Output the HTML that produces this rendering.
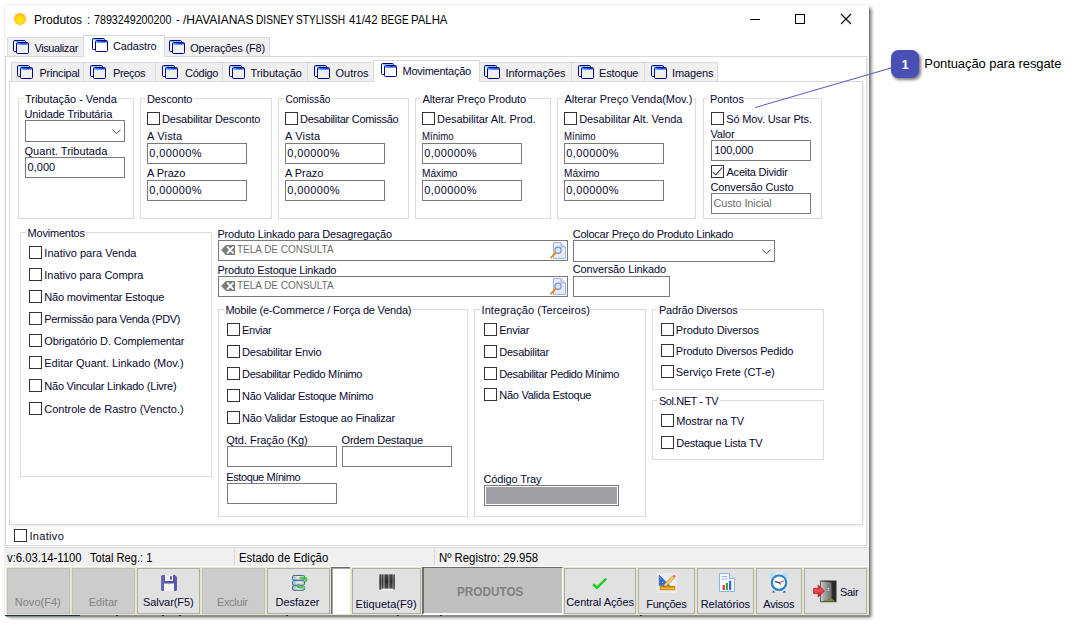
<!DOCTYPE html>
<html><head><meta charset="utf-8"><title>Produtos</title>
<style>
html,body{margin:0;padding:0;background:#fff;}
body{width:1078px;height:626px;position:relative;overflow:hidden;font-family:"Liberation Sans",sans-serif;}
div,svg{position:absolute;box-sizing:content-box}
.t{font:11px/13px "Liberation Sans",sans-serif;letter-spacing:-0.16px;color:#08082e;white-space:nowrap}
.gl{background:#fff;padding:0 1.5px;margin-left:-1.5px}
.s{font:12px/14px "Liberation Sans",sans-serif;color:#000;white-space:nowrap}
.cb{width:11px;height:11px;border:1px solid #333;background:#fff}
.in{border:1px solid #7a7a7a;background:#fff}
.gb{border:1px solid #dcdcdc}
.tab{border:1px solid #d9d9d9;border-bottom:none;background:#f0f0f0}
.tabsel{background:#fff}
.btn{border:1px solid #adadad;background:#e1e1e1}
.btnd{border:1px solid #bfbfbf;background:#cccccc}
</style></head><body>
<svg width="0" height="0"><defs><linearGradient id="tg" x1="0" x2="1"><stop offset="0" stop-color="#58b8ff"/><stop offset=".3" stop-color="#2268f0"/><stop offset="1" stop-color="#1838c8"/></linearGradient><linearGradient id="tg2" x1="0" x2="1"><stop offset="0" stop-color="#7cc8ff"/><stop offset=".5" stop-color="#4a90ff"/><stop offset="1" stop-color="#6aa4ff"/></linearGradient></defs></svg>

<div id="win" style="left:5px;top:5px;width:864px;height:610px;background:#fff;box-shadow:2.5px 2.5px 3.5px 0px rgba(0,0,0,.6),0 0 1.5px rgba(0,0,0,.22)"></div>
<div style="left:6px;top:615px;width:864px;height:1.6px;background:#8e8e8e"></div>
<div style="left:5px;top:615px;width:75px;height:1.3px;background:#1b2f4a"></div>
<div style="left:116px;top:615.3px;width:1.5px;height:1px;background:#2a2a3a"></div>
<div style="left:162px;top:615.3px;width:1.5px;height:1px;background:#2a2a3a"></div>
<div style="left:179px;top:615.3px;width:1.5px;height:1px;background:#2a2a3a"></div>
<div style="left:286px;top:615.3px;width:1.5px;height:1px;background:#2a2a3a"></div>
<div style="left:397px;top:615.3px;width:1.5px;height:1px;background:#2a2a3a"></div>
<div style="left:440px;top:615.3px;width:1.5px;height:1px;background:#2a2a3a"></div>
<div style="left:640px;top:615.3px;width:1.5px;height:1px;background:#2a2a3a"></div>
<svg width="18" height="18" viewBox="0 0 18 18" style="left:11px;top:10px"><defs><radialGradient id="sun" cx=".5" cy=".62" r=".6"><stop offset="0" stop-color="#fff400"/><stop offset=".6" stop-color="#ffd21e"/><stop offset="1" stop-color="#ffb42e"/></radialGradient></defs><g stroke="#ffc868" stroke-width="1.1" opacity=".55"><path d="M9 1.5V16.5M1.5 9H16.5M3.7 3.7L14.3 14.3M14.3 3.7L3.7 14.3"/></g><circle cx="9" cy="9" r="6" fill="url(#sun)"/></svg>
<div class="s" style="left:33.9px;top:12.8px;transform:scaleX(1.0015);transform-origin:0 0;color:#000">Produtos</div>
<div class="s" style="left:87.0px;top:12.8px;transform:scaleX(0.9300);transform-origin:0 0;color:#000">:</div>
<div class="s" style="left:94.3px;top:12.8px;transform:scaleX(0.8917);transform-origin:0 0;color:#000">7893249200200</div>
<div class="s" style="left:175.9px;top:12.8px;transform:scaleX(0.9300);transform-origin:0 0;color:#000">-</div>
<div class="s" style="left:183.4px;top:12.8px;transform:scaleX(1.0022);transform-origin:0 0;color:#000">/HAVAIANAS</div>
<div class="s" style="left:256.1px;top:12.8px;transform:scaleX(0.8462);transform-origin:0 0;color:#000">DISNEY</div>
<div class="s" style="left:296.4px;top:12.8px;transform:scaleX(0.8446);transform-origin:0 0;color:#000">STYLISSH</div>
<div class="s" style="left:349.0px;top:12.8px;transform:scaleX(0.9504);transform-origin:0 0;color:#000">41/42</div>
<div class="s" style="left:381.2px;top:12.8px;transform:scaleX(0.8271);transform-origin:0 0;color:#000">BEGE</div>
<div class="s" style="left:411.4px;top:12.8px;transform:scaleX(0.9472);transform-origin:0 0;color:#000">PALHA</div>
<svg width="110" height="14" viewBox="0 0 110 14" style="left:745px;top:12px"><path d="M5 7.5H15" stroke="#000" stroke-width="1"/><rect x="50.5" y="2.5" width="9" height="9" fill="none" stroke="#000"/><path d="M96 2L106 12M106 2L96 12" stroke="#000" stroke-width="1.1"/></svg>
<div style="left:5px;top:56px;width:860px;height:488px;border:1px solid #d9d9d9;background:#fff;box-shadow:1.5px 0 0 #f1f1f1"></div>
<div class="tab" style="left:7px;top:37px;width:75px;height:18px"></div>
<svg class="ti" width="17" height="15" viewBox="0 0 17 15" style="left:13px;top:40px"><rect x="0.5" y="0.5" width="12" height="11" rx="1" fill="none" stroke="#00008b"/><rect x="1" y="1" width="11" height="1" fill="#7cc8ff"/><rect x="3.5" y="2.5" width="12" height="11" rx="1" fill="#f0f0f0" stroke="#00008b"/><rect x="4" y="3" width="11" height="1" fill="url(#tg)"/><rect x="4" y="4" width="11" height="1" fill="url(#tg2)"/><rect x="13.5" y="3" width="1.3" height="1" fill="#f03030"/></svg>
<div class="t" style="left:34.4px;top:41.9px;letter-spacing:-0.389px;">Visualizar</div>
<div class="tab" style="left:164px;top:37px;width:104px;height:18px"></div>
<svg class="ti" width="17" height="15" viewBox="0 0 17 15" style="left:169px;top:40px"><rect x="0.5" y="0.5" width="12" height="11" rx="1" fill="none" stroke="#00008b"/><rect x="1" y="1" width="11" height="1" fill="#7cc8ff"/><rect x="3.5" y="2.5" width="12" height="11" rx="1" fill="#f0f0f0" stroke="#00008b"/><rect x="4" y="3" width="11" height="1" fill="url(#tg)"/><rect x="4" y="4" width="11" height="1" fill="url(#tg2)"/><rect x="13.5" y="3" width="1.3" height="1" fill="#f03030"/></svg>
<div class="t" style="left:190.2px;top:41.9px;letter-spacing:-0.156px;">Operações (F8)</div>
<div class="tab tabsel" style="left:83px;top:35px;width:80px;height:21px"></div>
<svg class="ti" width="17" height="15" viewBox="0 0 17 15" style="left:92px;top:38px"><rect x="0.5" y="0.5" width="12" height="11" rx="1" fill="none" stroke="#00008b"/><rect x="1" y="1" width="11" height="1" fill="#7cc8ff"/><rect x="3.5" y="2.5" width="12" height="11" rx="1" fill="#fff" stroke="#00008b"/><rect x="4" y="3" width="11" height="1" fill="url(#tg)"/><rect x="4" y="4" width="11" height="1" fill="url(#tg2)"/><rect x="13.5" y="3" width="1.3" height="1" fill="#f03030"/></svg>
<div class="t" style="left:113.0px;top:39.9px;letter-spacing:-0.163px;">Cadastro</div>
<div style="left:9px;top:81px;width:852px;height:442px;border:1px solid #d9d9d9;background:#fff;box-shadow:1.5px 1.5px 0 #f1f1f1"></div>
<div class="tab" style="left:11px;top:62px;width:71px;height:18px"></div>
<svg class="ti" width="17" height="15" viewBox="0 0 17 15" style="left:17px;top:65px"><rect x="0.5" y="0.5" width="12" height="11" rx="1" fill="none" stroke="#00008b"/><rect x="1" y="1" width="11" height="1" fill="#7cc8ff"/><rect x="3.5" y="2.5" width="12" height="11" rx="1" fill="#f0f0f0" stroke="#00008b"/><rect x="4" y="3" width="11" height="1" fill="url(#tg)"/><rect x="4" y="4" width="11" height="1" fill="url(#tg2)"/><rect x="13.5" y="3" width="1.3" height="1" fill="#f03030"/></svg>
<div class="t" style="left:39.5px;top:66.9px;letter-spacing:-0.236px;">Principal</div>
<div class="tab" style="left:83px;top:62px;width:71px;height:18px"></div>
<svg class="ti" width="17" height="15" viewBox="0 0 17 15" style="left:90px;top:65px"><rect x="0.5" y="0.5" width="12" height="11" rx="1" fill="none" stroke="#00008b"/><rect x="1" y="1" width="11" height="1" fill="#7cc8ff"/><rect x="3.5" y="2.5" width="12" height="11" rx="1" fill="#f0f0f0" stroke="#00008b"/><rect x="4" y="3" width="11" height="1" fill="url(#tg)"/><rect x="4" y="4" width="11" height="1" fill="url(#tg2)"/><rect x="13.5" y="3" width="1.3" height="1" fill="#f03030"/></svg>
<div class="t" style="left:113.0px;top:66.9px;letter-spacing:-0.350px;">Preços</div>
<div class="tab" style="left:155px;top:62px;width:66px;height:18px"></div>
<svg class="ti" width="17" height="15" viewBox="0 0 17 15" style="left:162px;top:65px"><rect x="0.5" y="0.5" width="12" height="11" rx="1" fill="none" stroke="#00008b"/><rect x="1" y="1" width="11" height="1" fill="#7cc8ff"/><rect x="3.5" y="2.5" width="12" height="11" rx="1" fill="#f0f0f0" stroke="#00008b"/><rect x="4" y="3" width="11" height="1" fill="url(#tg)"/><rect x="4" y="4" width="11" height="1" fill="url(#tg2)"/><rect x="13.5" y="3" width="1.3" height="1" fill="#f03030"/></svg>
<div class="t" style="left:185.1px;top:66.9px;letter-spacing:-0.292px;">Código</div>
<div class="tab" style="left:222px;top:62px;width:84px;height:18px"></div>
<svg class="ti" width="17" height="15" viewBox="0 0 17 15" style="left:229px;top:65px"><rect x="0.5" y="0.5" width="12" height="11" rx="1" fill="none" stroke="#00008b"/><rect x="1" y="1" width="11" height="1" fill="#7cc8ff"/><rect x="3.5" y="2.5" width="12" height="11" rx="1" fill="#f0f0f0" stroke="#00008b"/><rect x="4" y="3" width="11" height="1" fill="url(#tg)"/><rect x="4" y="4" width="11" height="1" fill="url(#tg2)"/><rect x="13.5" y="3" width="1.3" height="1" fill="#f03030"/></svg>
<div class="t" style="left:250.4px;top:66.9px;letter-spacing:-0.007px;">Tributação</div>
<div class="tab" style="left:307px;top:62px;width:66px;height:18px"></div>
<svg class="ti" width="17" height="15" viewBox="0 0 17 15" style="left:314px;top:65px"><rect x="0.5" y="0.5" width="12" height="11" rx="1" fill="none" stroke="#00008b"/><rect x="1" y="1" width="11" height="1" fill="#7cc8ff"/><rect x="3.5" y="2.5" width="12" height="11" rx="1" fill="#f0f0f0" stroke="#00008b"/><rect x="4" y="3" width="11" height="1" fill="url(#tg)"/><rect x="4" y="4" width="11" height="1" fill="url(#tg2)"/><rect x="13.5" y="3" width="1.3" height="1" fill="#f03030"/></svg>
<div class="t" style="left:335.5px;top:66.9px;letter-spacing:-0.003px;">Outros</div>
<div class="tab" style="left:479px;top:62px;width:91px;height:18px"></div>
<svg class="ti" width="17" height="15" viewBox="0 0 17 15" style="left:484px;top:65px"><rect x="0.5" y="0.5" width="12" height="11" rx="1" fill="none" stroke="#00008b"/><rect x="1" y="1" width="11" height="1" fill="#7cc8ff"/><rect x="3.5" y="2.5" width="12" height="11" rx="1" fill="#f0f0f0" stroke="#00008b"/><rect x="4" y="3" width="11" height="1" fill="url(#tg)"/><rect x="4" y="4" width="11" height="1" fill="url(#tg2)"/><rect x="13.5" y="3" width="1.3" height="1" fill="#f03030"/></svg>
<div class="t" style="left:505.4px;top:66.9px;letter-spacing:-0.043px;">Informações</div>
<div class="tab" style="left:571px;top:62px;width:72px;height:18px"></div>
<svg class="ti" width="17" height="15" viewBox="0 0 17 15" style="left:578px;top:65px"><rect x="0.5" y="0.5" width="12" height="11" rx="1" fill="none" stroke="#00008b"/><rect x="1" y="1" width="11" height="1" fill="#7cc8ff"/><rect x="3.5" y="2.5" width="12" height="11" rx="1" fill="#f0f0f0" stroke="#00008b"/><rect x="4" y="3" width="11" height="1" fill="url(#tg)"/><rect x="4" y="4" width="11" height="1" fill="url(#tg2)"/><rect x="13.5" y="3" width="1.3" height="1" fill="#f03030"/></svg>
<div class="t" style="left:599.1px;top:66.9px;letter-spacing:-0.163px;">Estoque</div>
<div class="tab" style="left:644px;top:62px;width:72px;height:18px"></div>
<svg class="ti" width="17" height="15" viewBox="0 0 17 15" style="left:651px;top:65px"><rect x="0.5" y="0.5" width="12" height="11" rx="1" fill="none" stroke="#00008b"/><rect x="1" y="1" width="11" height="1" fill="#7cc8ff"/><rect x="3.5" y="2.5" width="12" height="11" rx="1" fill="#f0f0f0" stroke="#00008b"/><rect x="4" y="3" width="11" height="1" fill="url(#tg)"/><rect x="4" y="4" width="11" height="1" fill="url(#tg2)"/><rect x="13.5" y="3" width="1.3" height="1" fill="#f03030"/></svg>
<div class="t" style="left:672.0px;top:66.9px;letter-spacing:-0.117px;">Imagens</div>
<div class="tab tabsel" style="left:373px;top:60px;width:105px;height:21px"></div>
<svg class="ti" width="17" height="15" viewBox="0 0 17 15" style="left:381px;top:63px"><rect x="0.5" y="0.5" width="12" height="11" rx="1" fill="none" stroke="#00008b"/><rect x="1" y="1" width="11" height="1" fill="#7cc8ff"/><rect x="3.5" y="2.5" width="12" height="11" rx="1" fill="#fff" stroke="#00008b"/><rect x="4" y="3" width="11" height="1" fill="url(#tg)"/><rect x="4" y="4" width="11" height="1" fill="url(#tg2)"/><rect x="13.5" y="3" width="1.3" height="1" fill="#f03030"/></svg>
<div class="t" style="left:402.5px;top:64.9px;letter-spacing:-0.259px;">Movimentação</div>
<div class="gb" style="left:18px;top:98px;width:114px;height:119px"></div>
<div class="t gl" style="left:25.0px;top:92.9px;letter-spacing:-0.044px;">Tributação - Venda</div>
<div class="t" style="left:24.5px;top:107.9px;letter-spacing:-0.123px;">Unidade Tributária</div>
<div class="in" style="left:25px;top:120px;width:98px;height:20px"><svg width="9" height="6" viewBox="0 0 9 6" style="left:86px;top:8px"><path d="M0.4 0.6 L4.5 4.7 L8.6 0.6" fill="none" stroke="#404040" stroke-width="1"/></svg></div>
<div class="t" style="left:24.5px;top:144.9px;letter-spacing:0.056px;">Quant. Tributada</div>
<div class="in" style="left:25px;top:157px;width:98px;height:19px"></div>
<div class="t" style="left:27.5px;top:160.9px;letter-spacing:0.042px;">0,000</div>
<div class="gb" style="left:140px;top:98px;width:130px;height:119px"></div>
<div class="t gl" style="left:147.0px;top:92.9px;letter-spacing:-0.141px;">Desconto</div>
<div class="cb" style="left:147px;top:112px"></div>
<div class="t" style="left:162.0px;top:112.9px;letter-spacing:-0.163px;">Desabilitar Desconto</div>
<div class="t" style="left:147.0px;top:129.9px;letter-spacing:0.192px;">A Vista</div>
<div class="in" style="left:147px;top:143px;width:98px;height:19px"></div>
<div class="t" style="left:149.2px;top:146.9px;letter-spacing:0.393px;">0,00000%</div>
<div class="t" style="left:147.0px;top:166.9px;letter-spacing:-0.039px;">A Prazo</div>
<div class="in" style="left:147px;top:180px;width:98px;height:19px"></div>
<div class="t" style="left:149.2px;top:183.9px;letter-spacing:0.393px;">0,00000%</div>
<div class="gb" style="left:278px;top:98px;width:129px;height:119px"></div>
<div class="t gl" style="left:285.0px;top:92.9px;letter-spacing:0;transform:scaleX(0.9205);transform-origin:0 0;">Comissão</div>
<div class="cb" style="left:285px;top:112px"></div>
<div class="t" style="left:300.0px;top:112.9px;letter-spacing:-0.276px;">Desabilitar Comissão</div>
<div class="t" style="left:285.0px;top:129.9px;letter-spacing:0.192px;">A Vista</div>
<div class="in" style="left:285px;top:143px;width:98px;height:19px"></div>
<div class="t" style="left:287.2px;top:146.9px;letter-spacing:0.393px;">0,00000%</div>
<div class="t" style="left:285.0px;top:166.9px;letter-spacing:-0.039px;">A Prazo</div>
<div class="in" style="left:285px;top:180px;width:98px;height:19px"></div>
<div class="t" style="left:287.2px;top:183.9px;letter-spacing:0.393px;">0,00000%</div>
<div class="gb" style="left:415px;top:98px;width:134px;height:119px"></div>
<div class="t gl" style="left:422.5px;top:92.9px;letter-spacing:-0.104px;">Alterar Preço Produto</div>
<div class="cb" style="left:422px;top:112px"></div>
<div class="t" style="left:437.0px;top:112.9px;letter-spacing:-0.046px;">Desabilitar Alt. Prod.</div>
<div class="t" style="left:422.0px;top:129.9px;letter-spacing:0;transform:scaleX(0.8756);transform-origin:0 0;">Mínimo</div>
<div class="in" style="left:422px;top:143px;width:98px;height:19px"></div>
<div class="t" style="left:424.2px;top:146.9px;letter-spacing:0.393px;">0,00000%</div>
<div class="t" style="left:422.0px;top:166.9px;letter-spacing:0;transform:scaleX(0.9223);transform-origin:0 0;">Máximo</div>
<div class="in" style="left:422px;top:180px;width:98px;height:19px"></div>
<div class="t" style="left:424.2px;top:183.9px;letter-spacing:0.393px;">0,00000%</div>
<div class="gb" style="left:557px;top:98px;width:137px;height:119px"></div>
<div class="t gl" style="left:564.5px;top:92.9px;letter-spacing:-0.037px;">Alterar Preço Venda(Mov.)</div>
<div class="cb" style="left:564px;top:112px"></div>
<div class="t" style="left:579.2px;top:112.9px;letter-spacing:-0.066px;">Desabilitar Alt. Venda</div>
<div class="t" style="left:564.0px;top:129.9px;letter-spacing:0;transform:scaleX(0.8756);transform-origin:0 0;">Mínimo</div>
<div class="in" style="left:564px;top:143px;width:98px;height:19px"></div>
<div class="t" style="left:566.2px;top:146.9px;letter-spacing:0.393px;">0,00000%</div>
<div class="t" style="left:564.0px;top:166.9px;letter-spacing:0;transform:scaleX(0.9223);transform-origin:0 0;">Máximo</div>
<div class="in" style="left:564px;top:180px;width:98px;height:19px"></div>
<div class="t" style="left:566.2px;top:183.9px;letter-spacing:0.393px;">0,00000%</div>
<div class="gb" style="left:703px;top:98px;width:117px;height:119px"></div>
<div class="t gl" style="left:709.9px;top:92.9px;letter-spacing:-0.050px;">Pontos</div>
<div class="cb" style="left:711px;top:112px"></div>
<div class="t" style="left:726.2px;top:112.9px;letter-spacing:-0.127px;">Só Mov. Usar Pts.</div>
<div class="t" style="left:710.5px;top:127.9px;">Valor</div>
<div class="in" style="left:711px;top:140px;width:98px;height:19px"></div>
<div class="t" style="left:714.2px;top:143.9px;letter-spacing:-0.078px;">100,000</div>
<div class="cb" style="left:711px;top:165px"><svg width="13" height="13" viewBox="0 0 13 13" style="left:-1px;top:-1px"><path d="M1.8 7.2 L4.9 9.8 L11.2 2.5" fill="none" stroke="#333" stroke-width="1.1"/></svg></div>
<div class="t" style="left:726.5px;top:165.9px;letter-spacing:-0.222px;">Aceita Dividir</div>
<div class="t" style="left:710.5px;top:180.9px;letter-spacing:-0.129px;">Conversão Custo</div>
<div class="in" style="left:711px;top:193px;width:98px;height:19px"></div>
<div class="t" style="left:713.4px;top:196.9px;letter-spacing:-0.127px;color:#6d6d6d;">Custo Inicial</div>
<div class="gb" style="left:20px;top:232px;width:190px;height:243px"></div>
<div class="t gl" style="left:27.5px;top:226.9px;letter-spacing:-0.200px;">Movimentos</div>
<div class="cb" style="left:29px;top:246px"></div>
<div class="t" style="left:44.3px;top:246.9px;letter-spacing:0.026px;">Inativo para Venda</div>
<div class="cb" style="left:29px;top:268px"></div>
<div class="t" style="left:44.3px;top:268.9px;letter-spacing:-0.032px;">Inativo para Compra</div>
<div class="cb" style="left:29px;top:290px"></div>
<div class="t" style="left:44.3px;top:290.9px;letter-spacing:-0.192px;">Não movimentar Estoque</div>
<div class="cb" style="left:29px;top:312px"></div>
<div class="t" style="left:44.3px;top:312.9px;letter-spacing:-0.324px;">Permissão para Venda (PDV)</div>
<div class="cb" style="left:29px;top:334px"></div>
<div class="t" style="left:44.3px;top:334.9px;letter-spacing:-0.137px;">Obrigatório D. Complementar</div>
<div class="cb" style="left:29px;top:356px"></div>
<div class="t" style="left:44.3px;top:356.9px;letter-spacing:-0.015px;">Editar Quant. Linkado (Mov.)</div>
<div class="cb" style="left:29px;top:379px"></div>
<div class="t" style="left:44.3px;top:379.9px;letter-spacing:-0.233px;">Não Vincular Linkado (Livre)</div>
<div class="cb" style="left:29px;top:402px"></div>
<div class="t" style="left:44.3px;top:402.9px;letter-spacing:-0.000px;">Controle de Rastro (Vencto.)</div>
<div class="t" style="left:217.4px;top:227.9px;">Produto Linkado para Desagregação</div>
<div class="in" style="left:218px;top:240px;width:348px;height:19px"></div>
<svg width="14" height="10" viewBox="0 0 14 10" style="left:221px;top:245px"><path d="M0 5L5 0H14V10H5Z" fill="#7c7c7c"/><path d="M6.2 1.6L12.4 8.4M12.4 1.6L6.2 8.4" stroke="#fff" stroke-width="1.9"/></svg>
<div class="t" style="left:236.8px;top:242.9px;letter-spacing:0;transform:scaleX(0.9066);transform-origin:0 0;color:#6d6d6d">TELA DE CONSULTA</div>
<svg width="16" height="17" viewBox="0 0 16 17" style="left:550px;top:242px"><path d="M3.5 0.5H11L15.5 5V16.5H3.5Z" fill="#e4ebfb" stroke="#a9b4dc"/><path d="M11 0.5V5H15.5" fill="#cfd8f3" stroke="#a9b4dc"/><circle cx="8" cy="8.3" r="3.1" fill="#d6e4ff" fill-opacity=".7" stroke="#7d8fc4" stroke-width="1.2"/><path d="M5.6 10.8L1 15.6" stroke="#e08a1e" stroke-width="1.8" stroke-linecap="round"/></svg>
<div class="t" style="left:217.4px;top:263.9px;letter-spacing:-0.202px;">Produto Estoque Linkado</div>
<div class="in" style="left:218px;top:276px;width:348px;height:19px"></div>
<svg width="14" height="10" viewBox="0 0 14 10" style="left:221px;top:281px"><path d="M0 5L5 0H14V10H5Z" fill="#7c7c7c"/><path d="M6.2 1.6L12.4 8.4M12.4 1.6L6.2 8.4" stroke="#fff" stroke-width="1.9"/></svg>
<div class="t" style="left:236.8px;top:278.9px;letter-spacing:0;transform:scaleX(0.9066);transform-origin:0 0;color:#6d6d6d">TELA DE CONSULTA</div>
<svg width="16" height="17" viewBox="0 0 16 17" style="left:550px;top:278px"><path d="M3.5 0.5H11L15.5 5V16.5H3.5Z" fill="#e4ebfb" stroke="#a9b4dc"/><path d="M11 0.5V5H15.5" fill="#cfd8f3" stroke="#a9b4dc"/><circle cx="8" cy="8.3" r="3.1" fill="#d6e4ff" fill-opacity=".7" stroke="#7d8fc4" stroke-width="1.2"/><path d="M5.6 10.8L1 15.6" stroke="#e08a1e" stroke-width="1.8" stroke-linecap="round"/></svg>
<div class="t" style="left:572.7px;top:227.9px;letter-spacing:-0.238px;">Colocar Preço do Produto Linkado</div>
<div class="in" style="left:573px;top:240px;width:200px;height:20px"><svg width="9" height="6" viewBox="0 0 9 6" style="left:188px;top:8px"><path d="M0.4 0.6 L4.5 4.7 L8.6 0.6" fill="none" stroke="#404040" stroke-width="1"/></svg></div>
<div class="t" style="left:572.7px;top:262.9px;letter-spacing:-0.081px;">Conversão Linkado</div>
<div class="in" style="left:573px;top:276px;width:95px;height:19px"></div>
<div class="gb" style="left:218px;top:309px;width:248px;height:206px"></div>
<div class="t gl" style="left:225.4px;top:303.9px;letter-spacing:-0.203px;">Mobile (e-Commerce / Força de Venda)</div>
<div class="cb" style="left:227px;top:323px"></div>
<div class="t" style="left:242.1px;top:323.9px;letter-spacing:-0.318px;">Enviar</div>
<div class="cb" style="left:227px;top:345px"></div>
<div class="t" style="left:242.1px;top:345.9px;letter-spacing:-0.184px;">Desabilitar Envio</div>
<div class="cb" style="left:227px;top:367px"></div>
<div class="t" style="left:242.1px;top:367.9px;letter-spacing:-0.333px;">Desabilitar Pedido Mínimo</div>
<div class="cb" style="left:227px;top:389px"></div>
<div class="t" style="left:242.1px;top:389.9px;letter-spacing:-0.316px;">Não Validar Estoque Mínimo</div>
<div class="cb" style="left:227px;top:411px"></div>
<div class="t" style="left:242.1px;top:411.9px;letter-spacing:-0.223px;">Não Validar Estoque ao Finalizar</div>
<div class="t" style="left:226.3px;top:433.9px;letter-spacing:-0.035px;">Qtd. Fração (Kg)</div>
<div class="in" style="left:227px;top:446px;width:108px;height:19px"></div>
<div class="t" style="left:341.5px;top:433.9px;letter-spacing:-0.174px;">Ordem Destaque</div>
<div class="in" style="left:342px;top:446px;width:108px;height:19px"></div>
<div class="t" style="left:226.3px;top:470.9px;letter-spacing:-0.406px;">Estoque Mínimo</div>
<div class="in" style="left:227px;top:483px;width:108px;height:19px"></div>
<div class="gb" style="left:474px;top:309px;width:170px;height:206px"></div>
<div class="t gl" style="left:481.5px;top:303.9px;letter-spacing:0.071px;">Integração (Terceiros)</div>
<div class="cb" style="left:484px;top:323px"></div>
<div class="t" style="left:499.2px;top:323.9px;letter-spacing:-0.198px;">Enviar</div>
<div class="cb" style="left:484px;top:345px"></div>
<div class="t" style="left:499.2px;top:345.9px;letter-spacing:-0.197px;">Desabilitar</div>
<div class="cb" style="left:484px;top:367px"></div>
<div class="t" style="left:499.2px;top:367.9px;letter-spacing:-0.337px;">Desabilitar Pedido Mínimo</div>
<div class="cb" style="left:484px;top:388px"></div>
<div class="t" style="left:499.2px;top:388.9px;letter-spacing:-0.248px;">Não Valida Estoque</div>
<div class="t" style="left:483.5px;top:472.9px;letter-spacing:-0.131px;">Código Tray</div>
<div style="left:484px;top:485px;width:133px;height:19px;border:1px solid #7a7a7a;background:#a0a0a4;box-shadow:inset 0 0 0 1px #fff"></div>
<div class="gb" style="left:652px;top:309px;width:170px;height:79px"></div>
<div class="t gl" style="left:658.9px;top:303.9px;letter-spacing:-0.173px;">Padrão Diversos</div>
<div class="cb" style="left:661px;top:323px"></div>
<div class="t" style="left:675.8px;top:323.9px;letter-spacing:-0.085px;">Produto Diversos</div>
<div class="cb" style="left:661px;top:344px"></div>
<div class="t" style="left:675.8px;top:344.9px;letter-spacing:-0.181px;">Produto Diversos Pedido</div>
<div class="cb" style="left:661px;top:365px"></div>
<div class="t" style="left:675.8px;top:365.9px;letter-spacing:-0.034px;">Serviço Frete (CT-e)</div>
<div class="gb" style="left:652px;top:400px;width:170px;height:58px"></div>
<div class="t gl" style="left:658.9px;top:394.9px;letter-spacing:-0.417px;">Sol.NET - TV</div>
<div class="cb" style="left:661px;top:414px"></div>
<div class="t" style="left:676.3px;top:414.9px;letter-spacing:-0.142px;">Mostrar na TV</div>
<div class="cb" style="left:661px;top:436px"></div>
<div class="t" style="left:676.3px;top:436.9px;letter-spacing:-0.256px;">Destaque Lista TV</div>
<div class="cb" style="left:14px;top:529px"></div>
<div class="t" style="left:29.5px;top:529.9px;letter-spacing:0.313px;">Inativo</div>
<div style="left:5px;top:547px;width:864px;height:19px;background:#f0f0f0;border-top:1px solid #dadada;box-sizing:border-box"></div>
<div style="left:234px;top:549px;width:1px;height:16px;background:#d7d7d7"></div>
<div style="left:434px;top:549px;width:1px;height:16px;background:#d7d7d7"></div>
<div class="s" style="left:6.5px;top:550.8px;transform:scaleX(0.9426);transform-origin:0 0;color:#000">v:6.03.14-1100</div>
<div class="s" style="left:90.2px;top:550.8px;transform:scaleX(0.9248);transform-origin:0 0;color:#000">Total Reg.: 1</div>
<div class="s" style="left:238.6px;top:550.8px;transform:scaleX(0.9486);transform-origin:0 0;color:#000">Estado de Edição</div>
<div class="s" style="left:439.1px;top:550.8px;transform:scaleX(0.9483);transform-origin:0 0;color:#000">Nº Registro: 29.958</div>
<div style="left:6px;top:567px;width:863px;height:48px;background:#e7e6c6"></div>
<div class="btnd" style="left:7px;top:568px;width:61px;height:44px"></div>
<div class="t" style="left:14.8px;top:595.9px;letter-spacing:0.008px;color:#838383;">Novo(F4)</div>
<div class="btnd" style="left:72px;top:568px;width:61px;height:44px"></div>
<div class="t" style="left:88.7px;top:595.9px;letter-spacing:0.070px;color:#838383;">Editar</div>
<div class="btn" style="left:137px;top:568px;width:61px;height:44px"></div>
<div class="t" style="left:143.0px;top:595.9px;letter-spacing:-0.072px;">Salvar(F5)</div>
<div class="btnd" style="left:202px;top:568px;width:61px;height:44px"></div>
<div class="t" style="left:216.9px;top:595.9px;letter-spacing:-0.319px;color:#838383;">Excluir</div>
<div class="btn" style="left:267px;top:568px;width:61px;height:44px"></div>
<div class="t" style="left:275.5px;top:595.9px;letter-spacing:-0.004px;">Desfazer</div>
<div style="left:331px;top:567px;width:19px;height:47px;background:#fff;border-top:1px solid #6d6d6d;border-left:1px solid #6d6d6d;box-sizing:border-box;box-shadow:inset 1px 1px 0 #a8a8a8"></div>
<div class="btn" style="left:352px;top:568px;width:67px;height:44px"></div>
<div class="t" style="left:355.5px;top:597.9px;letter-spacing:0.061px;">Etiqueta(F9)</div>
<div style="left:422px;top:567px;width:141px;height:48px;background:#c0c0c0;border-top:1.5px solid #6d6d6d;border-left:2px solid #6d6d6d;border-right:1.5px solid #fff;border-bottom:2px solid #fff;box-sizing:border-box"></div>
<div style="left:456.8px;top:583.6px;font:bold 13px/16px 'Liberation Sans',sans-serif;color:#808080;transform:scaleX(.905);transform-origin:0 0;white-space:nowrap">PRODUTOS</div>
<div class="btn" style="left:564px;top:568px;width:70px;height:44px"></div>
<div class="t" style="left:566.2px;top:595.9px;letter-spacing:-0.057px;">Central Ações</div>
<div class="btn" style="left:638px;top:568px;width:55px;height:44px"></div>
<div class="t" style="left:646.3px;top:597.9px;letter-spacing:-0.301px;">Funções</div>
<div class="btn" style="left:697px;top:568px;width:55px;height:44px"></div>
<div class="t" style="left:700.7px;top:597.9px;letter-spacing:-0.015px;">Relatórios</div>
<div class="btn" style="left:756px;top:568px;width:44px;height:44px"></div>
<div class="t" style="left:763.3px;top:597.9px;letter-spacing:-0.201px;">Avisos</div>
<div class="btn" style="left:804px;top:568px;width:61px;height:44px"></div>
<div class="t" style="left:840.0px;top:585.9px;letter-spacing:-0.321px;">Sair</div>
<svg width="16" height="16" viewBox="0 0 16 16" style="left:161px;top:575px"><defs><linearGradient id="fl" x1="0" x2="1"><stop offset="0" stop-color="#6a6cb4"/><stop offset=".5" stop-color="#4c4e9c"/><stop offset="1" stop-color="#5d5fae"/></linearGradient></defs><path d="M1.5 0H14L16 2V14.5A1.5 1.5 0 0 1 14.5 16H1.5A1.5 1.5 0 0 1 0 14.5V1.5A1.5 1.5 0 0 1 1.5 0Z" fill="url(#fl)"/><rect x="4" y="0" width="8" height="6" fill="#eeeef2"/><rect x="9" y="1.2" width="1.8" height="3.4" fill="#4c4e9c"/><rect x="3" y="8.5" width="10" height="7.5" fill="#f2f2f2"/></svg>
<svg width="16" height="16" viewBox="0 0 16 16" style="left:292px;top:575px"><defs><linearGradient id="db" x1="0" x2="1"><stop offset="0" stop-color="#9fb4cc"/><stop offset=".5" stop-color="#e6eef6"/><stop offset="1" stop-color="#b9c9db"/></linearGradient></defs><g fill="url(#db)" stroke="#4a6a92" stroke-width="1"><rect x="0.5" y="0.5" width="12" height="4.6" rx="1.3"/><rect x="0.5" y="5.6" width="12" height="4.6" rx="1.3"/><rect x="0.5" y="10.7" width="12" height="4.6" rx="1.3"/></g><path d="M9 3.2H13.3C14.6 3.2 15 4.6 14.2 5.6L13 7" fill="none" stroke="#3cc43c" stroke-width="1.8"/><path d="M9.6 0.8L6.6 3.2L9.6 5.6Z" fill="#5edc4a"/><path d="M11 12.4H7.2C5.8 12.4 5.4 11 6.2 10L7.2 8.8" fill="none" stroke="#3cc43c" stroke-width="1.8"/><path d="M10.6 10L13.8 12.4L10.6 14.8Z" fill="#5edc4a"/></svg>
<svg width="16" height="17" viewBox="0 0 16 17" style="left:378.5px;top:574px"><defs><linearGradient id="bc" x1="0" y1="0" x2="0" y2="1"><stop offset="0" stop-color="#4a4a4a"/><stop offset=".5" stop-color="#2a2a2a"/><stop offset="1" stop-color="#555"/></linearGradient></defs><rect x="0" y="14.6" width="16" height="2" fill="#f6f6f6"/><g fill="url(#bc)"><rect x="0.4" y="0.4" width="2" height="15.4"/><rect x="2.9" y="0.4" width="1.1" height="14.2"/><rect x="4.5" y="0.4" width="1" height="14.2"/><rect x="5.9" y="0.4" width="3.1" height="14.2"/><rect x="9.5" y="0.4" width="1.2" height="14.2"/><rect x="11.1" y="0.4" width="1.9" height="14.2"/><rect x="13.3" y="0.4" width="0.8" height="14.2"/><rect x="14.4" y="0.4" width="1.4" height="15.4"/></g><rect x="0.4" y="0.4" width="15.4" height="14.2" fill="#333" opacity=".18"/></svg>
<svg width="16" height="13" viewBox="0 0 16 13" style="left:592px;top:577px"><path d="M1.2 7.2L5 10.8L14.2 1.6" fill="none" stroke="#1cd01c" stroke-width="2.6"/></svg>
<svg width="20" height="20" viewBox="0 0 20 20" style="left:657px;top:573px"><rect width="20" height="20" fill="#ecece6"/><path d="M2.2 2.2V12.6H12.8Z" fill="#3c70e4" stroke="#2a58c8" stroke-width=".6"/><path d="M4.4 6.6V10.6H8.4Z" fill="#2448b0"/><circle cx="5.6" cy="9.4" r=".8" fill="#fff"/><path d="M6.5 12L15.5 3L17.5 5L8.5 14Z" fill="#f3cf63" stroke="#a97f22" stroke-width=".6"/><path d="M15.5 3L16.4 2.1A1.2 1.2 0 0 1 18.2 2.2L18.4 2.4A1.2 1.2 0 0 1 18.4 4.1L17.5 5Z" fill="#e08080"/><path d="M6.5 12L6 14.5L8.5 14Z" fill="#333"/><rect x="3.2" y="13.3" width="14.6" height="3.5" fill="#ffb030" stroke="#b08000" stroke-width=".8"/><path d="M5 13.3V14.8M7 13.3V14.8M9 13.3V14.8M11 13.3V14.8M13 13.3V14.8M15 13.3V14.8" stroke="#8a6000" stroke-width=".6"/></svg>
<svg width="16" height="20" viewBox="0 0 16 20" style="left:719px;top:572.5px"><path d="M0.5 0.5H10.5L15.5 5.5V18.5H0.5Z" fill="#f5f9ff" stroke="#8fb1e0"/><path d="M10.5 0.5V5.5H15.5" fill="#dbe8fb" stroke="#8fb1e0"/><path d="M2.5 3.5H8.5M2.5 6H8.5" stroke="#9cbbe6" stroke-width="1.2"/><rect x="3.6" y="12" width="2.2" height="5" fill="#e03c3c"/><rect x="6.8" y="10" width="2.2" height="7" fill="#3aa640"/><rect x="10" y="7.8" width="2.2" height="9.2" fill="#2f66c8"/></svg>
<svg width="20" height="21" viewBox="0 0 20 21" style="left:769px;top:572px"><circle cx="10" cy="10.5" r="10" fill="#f4f4f4" opacity=".7"/><circle cx="3.8" cy="4" r="3.2" fill="#b4e0fa"/><circle cx="16.2" cy="4" r="3.2" fill="#b4e0fa"/><path d="M4.5 18.5L3 20.5H6.5ZM15.5 18.5L17 20.5H13.5Z" fill="#1d5f9e"/><circle cx="10" cy="10.8" r="8" fill="#2a86c8"/><circle cx="10" cy="10.8" r="8" fill="none" stroke="#1b6aa8" stroke-width=".6"/><circle cx="10" cy="10.6" r="6.1" fill="#fbfdff"/><path d="M10 10.8L6.2 9.6" stroke="#223" stroke-width="1.2"/><path d="M10 10.8L15 8.8" stroke="#d04040" stroke-width="1"/><path d="M10 10.8L11.8 12.3" stroke="#223" stroke-width="1"/></svg>
<svg width="26" height="23" viewBox="0 0 26 23" style="left:811.5px;top:579.5px"><defs><linearGradient id="dr" x1="0" x2="1"><stop offset="0" stop-color="#f0f0f0"/><stop offset=".12" stop-color="#b4b4b4"/><stop offset="1" stop-color="#6c6c6c"/></linearGradient><linearGradient id="di" x1="0" x2="1"><stop offset="0" stop-color="#5a5a5a"/><stop offset="1" stop-color="#222"/></linearGradient><linearGradient id="ar" x1="0" y1="0" x2="0" y2="1"><stop offset="0" stop-color="#d01020"/><stop offset=".45" stop-color="#f05050"/><stop offset="1" stop-color="#c00818"/></linearGradient></defs><rect x="8.3" y="0.5" width="16.2" height="21.7" fill="#283434"/><rect x="9.2" y="1.4" width="14.4" height="20" fill="url(#di)"/><path d="M9.2 1.4L19.6 2.4V18.8L9.2 21.4Z" fill="url(#dr)"/><path d="M9.6 21.4L19.6 18.8L23.6 21.4Z" fill="#7c8c34"/><circle cx="16.7" cy="8.6" r=".7" fill="#eee"/><circle cx="16.1" cy="10.4" r=".6" fill="#ddd"/><path d="M1.6 8.4H6.2V4.9L12.4 11L6.2 17.1V13.6H1.6Z" fill="url(#ar)" stroke="#b00818" stroke-width=".7"/></svg>
<svg width="160" height="50" viewBox="0 0 160 50" style="left:750px;top:62px"><path d="M5.3 45.5L141 6" stroke="#5a5fc0" stroke-width="1.1" fill="none"/></svg>
<div style="left:891px;top:50px;width:28px;height:28px;border-radius:7.5px;background:#4a4fb6;box-shadow:1.5px 2px 3px rgba(0,0,0,.5)"></div>
<div style="left:891px;top:57px;width:28px;text-align:center;font:bold 13px/16px 'Liberation Sans',sans-serif;color:#fff">1</div>
<div style="left:924.3px;top:56px;font:13px/16px 'Liberation Sans',sans-serif;color:#000;white-space:nowrap;letter-spacing:-0.08px">Pontuação para resgate</div>
</body></html>
